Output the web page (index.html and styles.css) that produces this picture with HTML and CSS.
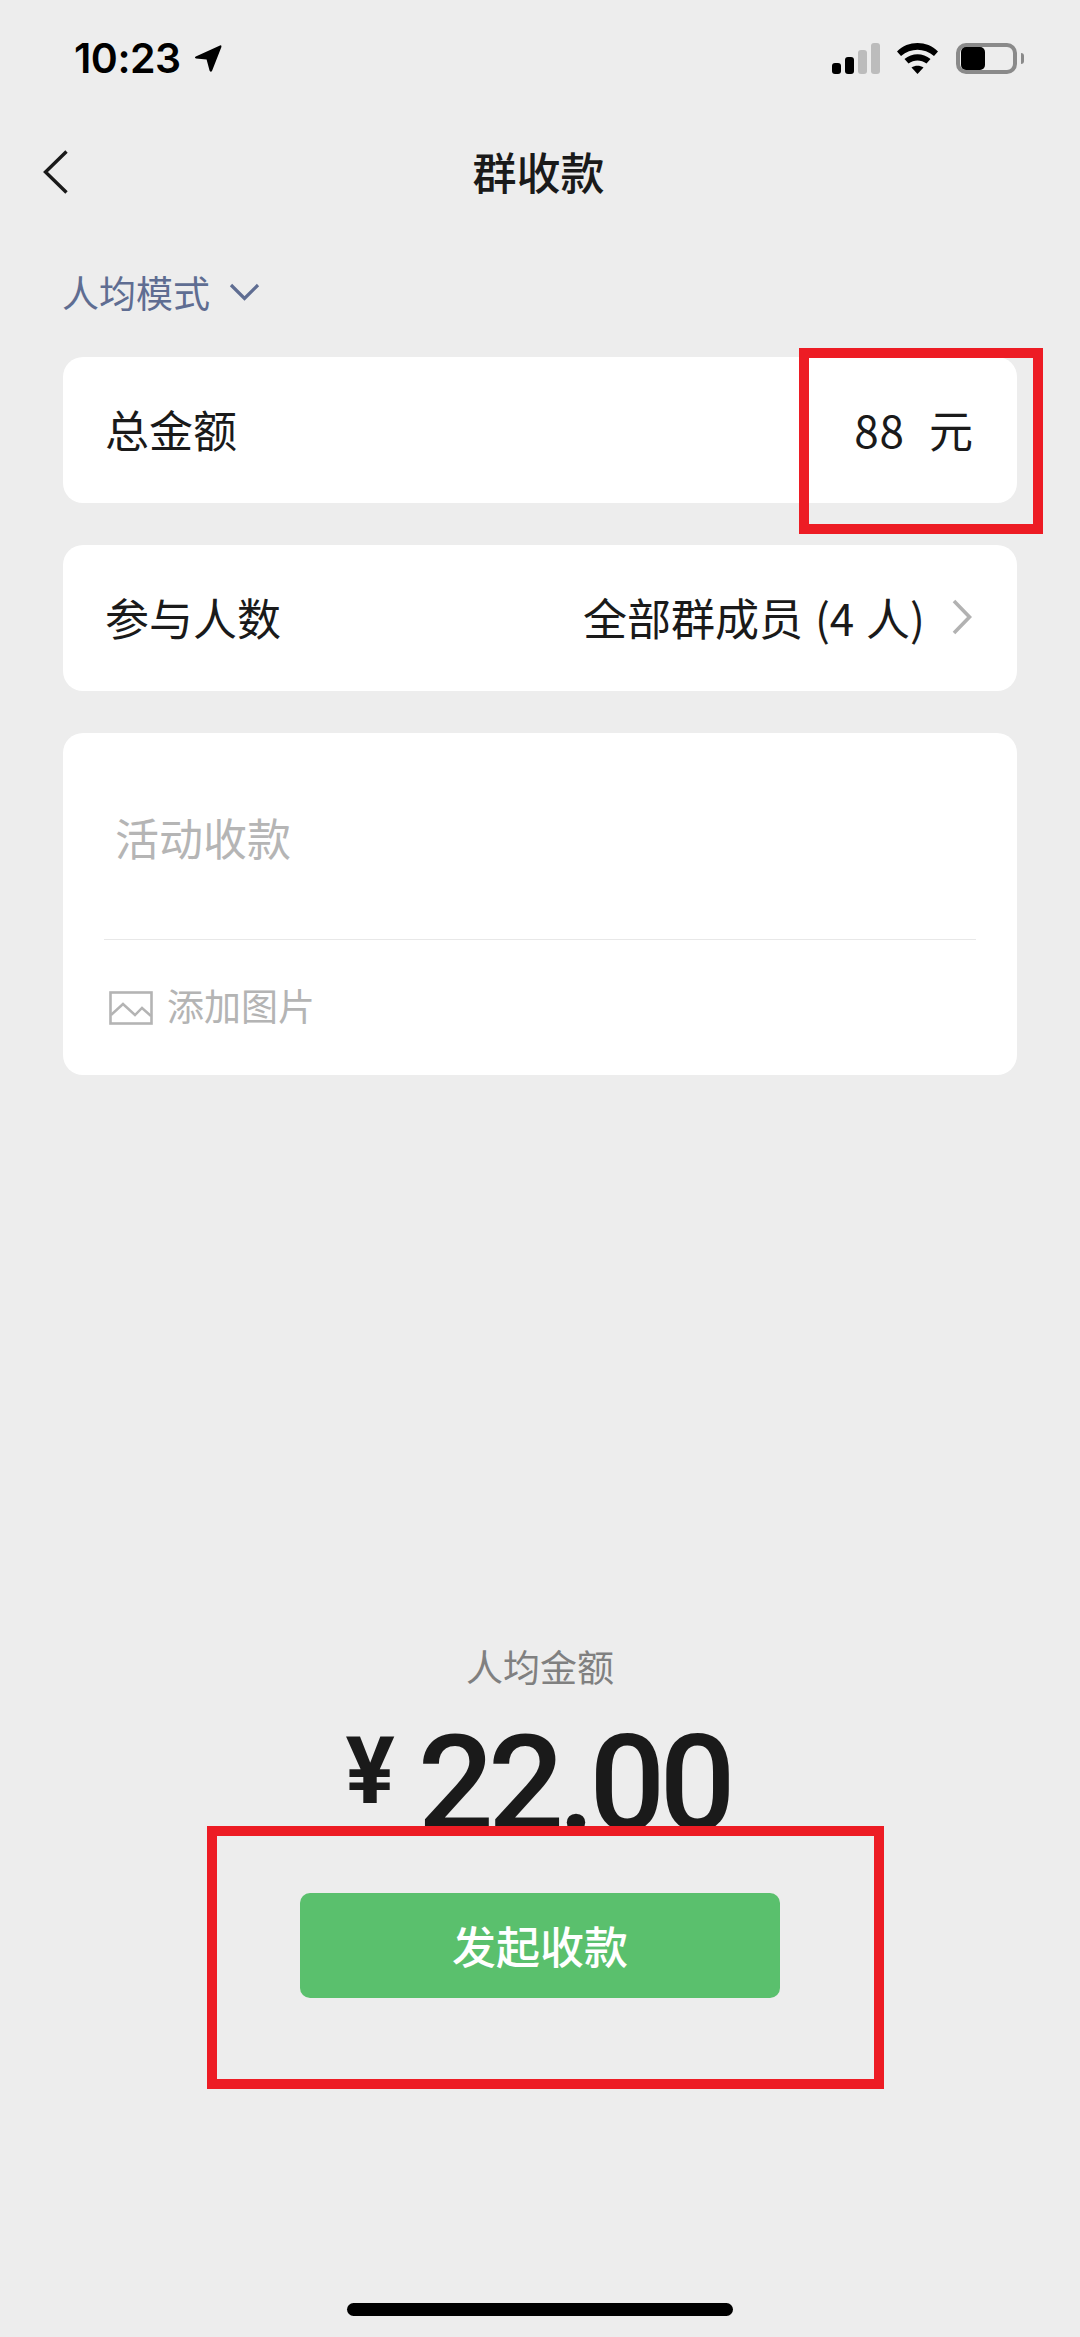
FILE: index.html
```html
<!DOCTYPE html>
<html lang="zh-CN">
<head>
  <meta charset="UTF-8">
  <title>群收款</title>
  <link rel="stylesheet" href="styles.css">
</head>
<body>
  <div class="page">
    <div class="status-bar">
      <div class="status-left">
        <span class="time">10:23</span>
        <svg class="loc-icon" width="28" height="29" viewBox="0 0 28 29"><path d="M26 1.5 L1.8 12.6 Q0 13.6 2 14.6 L12.6 15.4 L15.6 26.8 Q17 29 18.2 26.6 L27.4 3 Q27.8 0.8 26 1.5 Z" fill="#000"/></svg>
      </div>
      <div class="status-right">
        <div class="signal">
          <span class="bar b1"></span>
          <span class="bar b2"></span>
          <span class="bar b3"></span>
          <span class="bar b4"></span>
        </div>
        <svg class="wifi" width="41" height="31" viewBox="0 0 41 31">
          <path d="M0 8.5 C11 -2.8 30 -2.8 41 8.5 L37 13 C27 4.5 14 4.5 4 13 Z" fill="#000"/>
          <path d="M7.5 16 C15 9.5 26 9.5 33.5 16 L29.5 20.5 C24 16.5 17 16.5 11.5 20.5 Z" fill="#000"/>
          <path d="M14.5 24.5 C18 22 23 22 26.5 24.5 L20.5 31 Z" fill="#000"/>
        </svg>
        <div class="battery">
          <div class="battery-body"><div class="battery-fill"></div></div>
          <div class="battery-cap"></div>
        </div>
      </div>
    </div>

    <div class="nav">
      <svg class="back" width="26" height="44" viewBox="0 0 26 44"><path d="M23.5 1.5 L2.5 22 L23.5 42.5" fill="none" stroke="#1a1a1a" stroke-width="3.4"/></svg>
      <div class="nav-title">群收款</div>
    </div>

    <div class="mode">
      <span>人均模式</span>
      <svg width="31" height="18" viewBox="0 0 31 18"><path d="M2 2 L15.5 15.5 L29 2" fill="none" stroke="#5f6d92" stroke-width="3.2"/></svg>
    </div>

    <div class="cards">
      <div class="card row">
        <span>总金额</span>
        <span class="amount"><span class="amount-num">88</span><span>元</span></span>
      </div>
      <div class="card row">
        <span>参与人数</span>
        <span class="members">
          <span class="members-text">全部群成员 (4 人)</span>
          <svg width="22" height="36" viewBox="0 0 22 36"><path d="M3 2 L18.5 18 L3 34" fill="none" stroke="#b2b2b2" stroke-width="3.6"/></svg>
        </span>
      </div>
      <div class="card note">
        <div class="note-title">活动收款</div>
        <div class="note-foot">
          <svg width="44" height="34" viewBox="0 0 44 34">
            <rect x="1.5" y="1.5" width="41" height="31" fill="none" stroke="#b4b4b4" stroke-width="2.6"/>
            <path d="M2 24 L14 13 L26 24 L33 17 L42 25" fill="none" stroke="#b4b4b4" stroke-width="2.4"/>
          </svg>
          <span class="note-add">添加图片</span>
        </div>
      </div>
    </div>

    <div class="summary">
      <div class="summary-label">人均金额</div>
      <div class="summary-amount"><span class="yen">¥</span><span class="total">22.00</span></div>
      <button class="submit">发起收款</button>
    </div>

    <div class="home-bar"></div>

    <div class="mark mark-amount"></div>
    <div class="mark mark-submit"></div>
  </div>
</body>
</html>
```

FILE: styles.css
```css
* {
  box-sizing: border-box;
}
body {
  margin: 0;
  background-color: #ededed;
  font-family: "Noto Sans CJK SC", "Noto Sans", sans-serif;
  color: #1a1a1a;
}
.page {
  position: relative;
  width: 1080px;
  height: 2337px;
  display: flex;
  flex-direction: column;
  overflow: hidden;
}

.status-bar {
  height: 117px;
  padding: 0 56px 0 74px;
  display: flex;
  align-items: center;
  justify-content: space-between;
}
.status-left {
  display: flex;
  align-items: center;
  gap: 13px;
}
.time {
  padding-bottom: 2px;
  font-family: Inter, sans-serif;
  font-size: 41px;
  font-weight: 600;
  line-height: 48px;
  letter-spacing: -0.5px;
  color: #000;
}
.status-right {
  display: flex;
  align-items: center;
}
.signal {
  display: flex;
  align-items: flex-end;
  gap: 4px;
  height: 31px;
}
.bar {
  width: 9px;
  border-radius: 3px;
  background-color: #000;
}
.b1 { height: 11px; }
.b2 { height: 17px; }
.b3 { height: 24px; background-color: #bcbcbc; }
.b4 { height: 31px; background-color: #bcbcbc; }
.wifi {
  margin-left: 17px;
}
.battery {
  margin-left: 18px;
  display: flex;
  align-items: center;
  gap: 4px;
}
.battery-body {
  width: 61px;
  height: 31px;
  padding: 0 1px;
  border: 4px solid #8a8a8a;
  border-radius: 10px;
}
.battery-fill {
  width: 24px;
  height: 100%;
  border-radius: 5px;
  background-color: #000;
}
.battery-cap {
  width: 3px;
  height: 11px;
  border-radius: 0 3px 3px 0;
  background-color: #8a8a8a;
}

.nav {
  position: relative;
  height: 110px;
  padding: 0 3px 2px 0;
  display: flex;
  align-items: center;
  justify-content: center;
}
.back {
  position: absolute;
  left: 43px;
  top: 33px;
}
.nav-title {
  font-size: 44px;
  font-weight: 500;
  line-height: 60px;
}

.mode {
  height: 130px;
  padding-left: 62px;
  display: flex;
  align-items: center;
  gap: 19px;
  font-size: 37px;
  color: #5f6d92;
}

.cards {
  margin: 0 63px;
  display: flex;
  flex-direction: column;
  gap: 42px;
}
.card {
  border-radius: 20px;
  background-color: #fff;
}
.row {
  height: 146px;
  padding: 0 44px 3px 42px;
  display: flex;
  align-items: center;
  justify-content: space-between;
  font-size: 44px;
}
.amount {
  display: flex;
  gap: 24px;
}
.amount-num {
  letter-spacing: 1px;
}
.members {
  display: flex;
  align-items: center;
  gap: 26px;
}
.members-text {
  word-spacing: 2px;
}
.note {
  height: 342px;
  padding: 0 41px;
}
.note-title {
  height: 207px;
  padding: 2px 0 0 11px;
  border-bottom: 1px solid #e8e8e8;
  display: flex;
  align-items: center;
  font-size: 44px;
  color: #b5b5b5;
}
.note-foot {
  height: 135px;
  padding-left: 5px;
  display: flex;
  align-items: center;
  gap: 14px;
  font-size: 37px;
  color: #b4b4b4;
}
.note-add {
  padding-bottom: 5px;
}

.summary {
  margin-top: 563px;
  display: flex;
  flex-direction: column;
  align-items: center;
}
.summary-label {
  font-size: 37px;
  line-height: 56px;
  color: #808080;
}
.summary-amount {
  height: 161px;
  padding: 16px 5px 0 0;
  display: flex;
  align-items: flex-start;
  gap: 23px;
}
.yen {
  font-family: Roboto, sans-serif;
  font-size: 92px;
  font-weight: 700;
  line-height: 100px;
  margin-top: 12px;
}
.total {
  font-family: Roboto, sans-serif;
  font-size: 134px;
  font-weight: 500;
  line-height: 150px;
  letter-spacing: -6px;
}
.submit {
  width: 480px;
  height: 105px;
  margin-top: 38px;
  padding-bottom: 3px;
  border: 0;
  border-radius: 10px;
  background-color: #5ac06d;
  font-family: inherit;
  font-size: 44px;
  font-weight: 500;
  color: #fff;
}

.home-bar {
  width: 386px;
  height: 13px;
  margin: auto auto 21px;
  border-radius: 7px;
  background-color: #000;
}

/* red annotation boxes drawn over the screenshot */
.mark {
  position: absolute;
  border: 10px solid #ed1c24;
}
.mark-amount {
  left: 799px;
  top: 348px;
  width: 244px;
  height: 186px;
}
.mark-submit {
  left: 207px;
  top: 1826px;
  width: 677px;
  height: 263px;
}
```
